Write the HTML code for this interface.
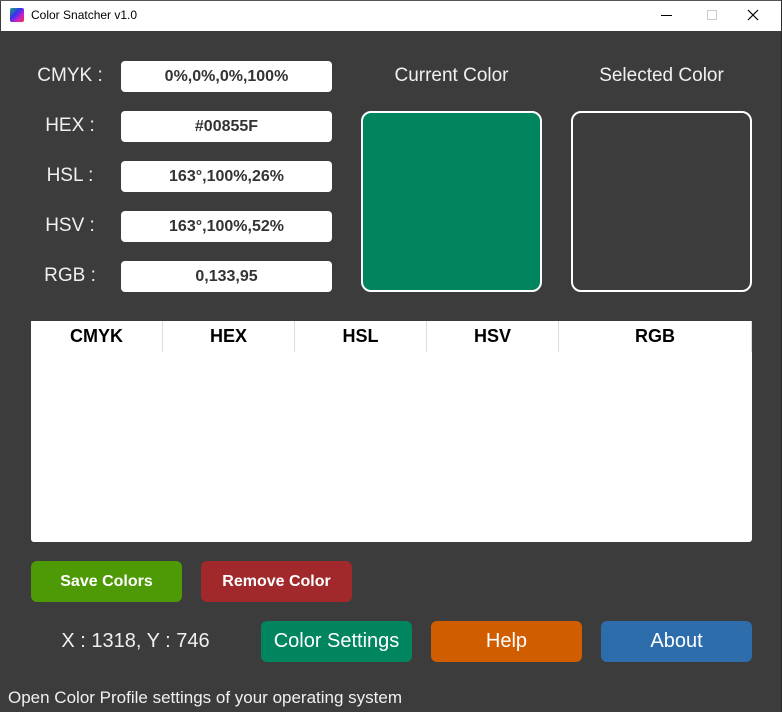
<!DOCTYPE html>
<html><head><style>
*{margin:0;padding:0;box-sizing:border-box}
body{width:782px;height:712px;background:#3c3c3c;font-family:"Liberation Sans",sans-serif;position:relative;overflow:hidden}
.t{position:absolute;left:1px;top:1px;width:780px;height:30px;background:#fff}
.a{position:absolute}
.lbl{color:#f0f0f0;font-size:19px;text-align:center}
.box{position:absolute;left:121px;width:211px;height:31px;background:#fff;border-radius:4px;font-weight:bold;font-size:16px;color:#333;text-align:center;line-height:31px}
.btn{position:absolute;border-radius:6px;color:#fff;text-align:center}
.th{position:absolute;top:321px;height:31px;line-height:31px;text-align:center;font-weight:bold;font-size:18px;color:#000;border-right:1px solid #ddd}
</style></head><body>
<div class="a" style="left:0;top:0;width:782px;height:1px;background:#555"></div>
<div class="t"></div>
<div class="a" style="left:10px;top:8px;width:14px;height:14px;border-radius:2px;background:linear-gradient(135deg,#2a7 0%,#33e 40%,#c2c 70%,#e33 100%)"></div>
<div class="a" style="left:31px;top:8px;font-size:12px;color:#000">Color Snatcher v1.0</div>
<div class="a" style="left:661px;top:15px;width:11px;height:1px;background:#000"></div>
<div class="a" style="left:707px;top:10px;width:10px;height:10px;border:1px solid #ccc"></div>
<svg class="a" style="left:747px;top:9px" width="12" height="12"><path d="M1 1L11 11M11 1L1 11" stroke="#000" stroke-width="1.2"/></svg>
<div class="a lbl" style="left:28px;top:65px;width:84px">CMYK :</div>
<div class="a lbl" style="left:28px;top:115px;width:84px">HEX :</div>
<div class="a lbl" style="left:28px;top:165px;width:84px">HSL :</div>
<div class="a lbl" style="left:28px;top:215px;width:84px">HSV :</div>
<div class="a lbl" style="left:28px;top:265px;width:84px">RGB :</div>
<div class="box" style="top:61px">0%,0%,0%,100%</div>
<div class="box" style="top:111px">#00855F</div>
<div class="box" style="top:161px">163°,100%,26%</div>
<div class="box" style="top:211px">163°,100%,52%</div>
<div class="box" style="top:261px">0,133,95</div>
<div class="a lbl" style="left:361px;top:65px;width:181px">Current Color</div>
<div class="a lbl" style="left:571px;top:65px;width:181px">Selected Color</div>
<div class="a" style="left:361px;top:111px;width:181px;height:181px;background:#00855f;border:2px solid #fff;border-radius:10px"></div>
<div class="a" style="left:571px;top:111px;width:181px;height:181px;background:#3c3c3c;border:2px solid #fff;border-radius:10px"></div>
<div class="a" style="left:31px;top:321px;width:721px;height:221px;background:#fff;border-radius:0 0 3px 3px"></div>
<div class="th" style="left:31px;width:132px">CMYK</div>
<div class="th" style="left:163px;width:132px">HEX</div>
<div class="th" style="left:295px;width:132px">HSL</div>
<div class="th" style="left:427px;width:132px">HSV</div>
<div class="th" style="left:559px;width:193px">RGB</div>
<div class="btn" style="left:31px;top:561px;width:151px;height:41px;line-height:41px;background:#4e9a06;font-weight:bold;font-size:16px">Save Colors</div>
<div class="btn" style="left:201px;top:561px;width:151px;height:41px;line-height:41px;background:#a1292c;font-weight:bold;font-size:16px">Remove Color</div>
<div class="a lbl" style="left:40px;top:630px;width:191px;font-size:20px">X : 1318, Y : 746</div>
<div class="btn" style="left:261px;top:621px;width:151px;height:41px;line-height:41px;background:#00855f;font-size:20px">Color Settings</div>
<div class="btn" style="left:431px;top:621px;width:151px;height:41px;line-height:41px;background:#d05e00;font-size:20px">Help</div>
<div class="btn" style="left:601px;top:621px;width:151px;height:41px;line-height:41px;background:#2e6dab;font-size:20px">About</div>
<div class="a" style="left:8px;top:688px;font-size:17px;color:#f0f0f0">Open Color Profile settings of your operating system</div>
<div class="a" style="left:781px;top:0;width:1px;height:712px;background:#2a2a2a"></div>
</body></html>
